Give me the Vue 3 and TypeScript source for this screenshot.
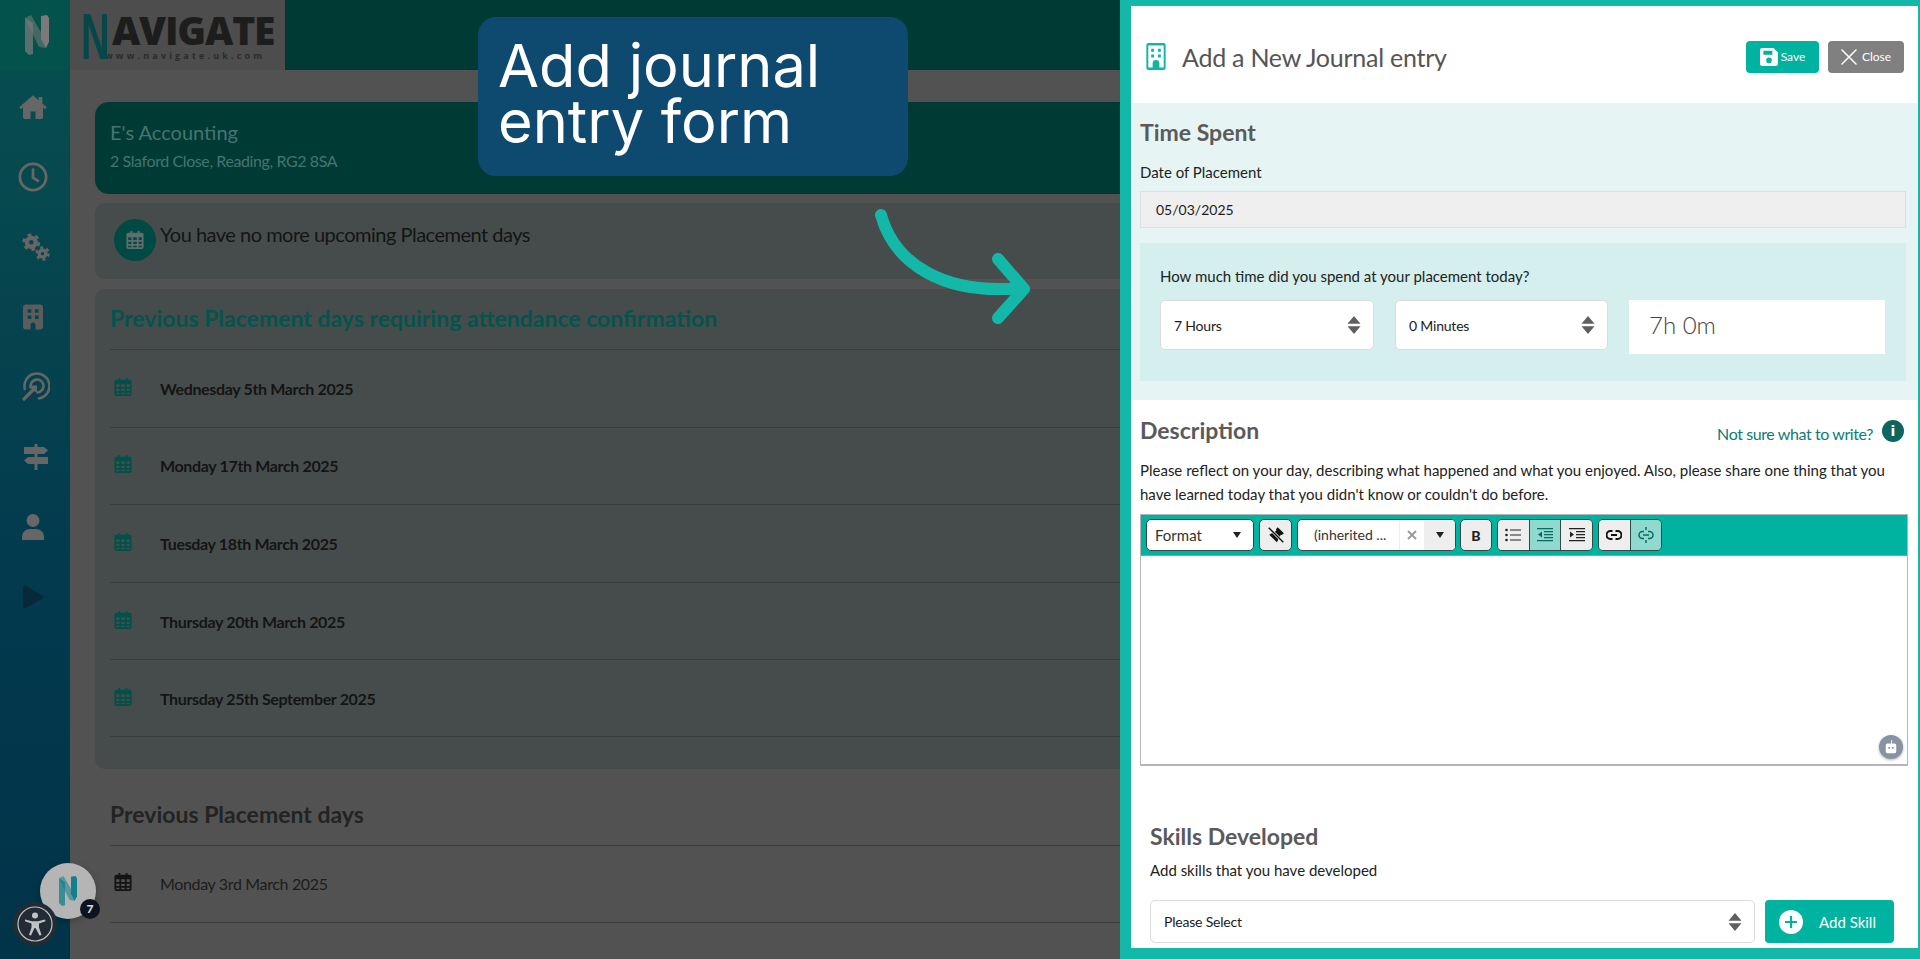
<script setup lang="ts">
const pending: string[] = [
  'Wednesday 5th March 2025',
  'Monday 17th March 2025',
  'Tuesday 18th March 2025',
  'Thursday 20th March 2025',
  'Thursday 25th September 2025',
]
</script>

<template>
  <div class="page">
    <svg class="defs" width="0" height="0" aria-hidden="true">
      <symbol id="cal" viewBox="0 0 20 20">
        <path fill-rule="evenodd" d="M5 0h2v2h6V0h2v2h2.500A2 2 0 0 1 19.500 4v14a2 2 0 0 1-2 2h-15a2 2 0 0 1-2-2V4a2 2 0 0 1 2-2H5zM2.500 7v3h3.500V7zm5.500 0v3h4V7zm6 0v3h3.500V7zM2.500 12v2.500h3.500V12zm5.500 0v2.500h4V12zm6 0v2.500h3.500V12zM2.500 16.500v1.500h3.500v-1.500zm5.500 0v1.500h4v-1.500zm6 0v1.500h3.500v-1.500z" />
      </symbol>
      <symbol id="updown" viewBox="0 0 14 18">
        <path d="M7 0l6.500 7.800H.5zM.5 10.200h13L7 18z" />
      </symbol>
      <symbol id="nmark" viewBox="0 0 24 40">
        <path d="M0 3l8 5v31l-4 1-4-4z" opacity=".75" />
        <path d="M0 3l6-3 15 26v7l-7-1z" opacity=".55" />
        <path d="M16 1l6-1 2 3v24l-3 6-5-9z" />
      </symbol>
    </svg>

    <aside class="sidebar">
      <div class="side-top">
        <svg class="side-n" width="24" height="40"><use href="#nmark" /></svg>
      </div>
      <nav class="side-nav">
        <svg viewBox="0 0 24 24" width="30" height="30" fill="#666"><path d="M12 2.500 1 12.200l1.300 1.500L4 12.300V20a1.500 1.500 0 0 0 1.500 1.500H10v-6h4v6h4.500A1.500 1.500 0 0 0 20 20v-7.700l1.700 1.400 1.300-1.500-3.500-3V4h-3v2.600z" /></svg>
        <svg viewBox="0 0 24 24" width="30" height="30" fill="none" stroke="#666" stroke-width="2.200" stroke-linecap="round"><circle cx="12" cy="12" r="10.500" /><path d="M12 6v6.500l4 2.500" /></svg>
        <svg viewBox="0 0 32 32" width="32" height="32" fill="none" stroke="#666"><circle cx="11" cy="11" r="4.700" stroke-width="4.600" /><circle cx="11" cy="11" r="8" stroke-width="3" stroke-dasharray="4 4.380" /><circle cx="23" cy="23" r="3.600" stroke-width="3.600" /><circle cx="23" cy="23" r="6.400" stroke-width="2.600" stroke-dasharray="3.200 3.500" /></svg>
        <svg viewBox="0 0 20 25" width="20" height="25" fill="#5c5c5c"><path fill-rule="evenodd" d="M3 0h14a3 3 0 0 1 3 3v19a3 3 0 0 1-3 3h-4.500v-4.500a2.500 2.500 0 0 0-5 0V25H3a3 3 0 0 1-3-3V3a3 3 0 0 1 3-3zm1.700 4.700v3.600h3.600V4.700zm7.300 0v3.600h3.600V4.700zM4.700 11v3.600h3.600V11zm7.300 0v3.600h3.600V11z" /></svg>
        <svg viewBox="0 0 28 28" width="28" height="28" fill="none" stroke="#666" stroke-width="2.600" stroke-linecap="round"><path d="M2.800 16A12.500 12.500 0 1 1 17 25.400" /><path d="M8.700 14.500A6.500 6.500 0 1 1 15.500 19.500" /><path d="M2 26l10-10" stroke-width="3.200" /><path d="M15 12.500V20l-3-2-2-2-2.500-3.500z" fill="#666" stroke="none" /></svg>
        <svg viewBox="0 0 26 26" width="26" height="26" fill="#666"><path d="M11.500 0h3v26h-3z" /><path d="M1 3h20l4 3.500-4 3.500H1zM5 13h20v7H5l-4-3.500z" /></svg>
        <svg viewBox="0 0 22 26" width="22" height="26" fill="#666"><circle cx="11" cy="6.500" r="6.500" /><path d="M0 26v-3c0-5 4-8 8-8h6c4 0 8 3 8 8v3z" /></svg>
        <svg class="play" viewBox="0 0 22 24" width="22" height="24" fill="#07293a"><path d="M1 2.500C1 1 2.500.300 3.700 1l17 9.500c1.300.7 1.300 2.300 0 3l-17 9.500C2.500 23.700 1 23 1 21.500z" /></svg>
      </nav>
    </aside>

    <main class="main">
      <header class="topbar">
        <div class="logo">
          <div class="logo-word"><span class="logo-n">N</span><span>AVIGATE</span></div>
          <div class="logo-url">www.navigate.uk.com</div>
        </div>
      </header>

      <section class="content">
        <div class="place-card">
          <div class="place-name">E's Accounting</div>
          <div class="place-addr">2 Slaford Close, Reading, RG2 8SA</div>
        </div>

        <div class="notice">
          <span class="notice-icon"><svg width="18" height="20" fill="#5f6e6c"><use href="#cal" /></svg></span>
          <span class="notice-text">You have no more upcoming Placement days</span>
        </div>

        <div class="pending">
          <h2 class="pending-title">Previous Placement days requiring attendance confirmation</h2>
          <div v-for="day in pending" :key="day" class="day-row strong">
            <svg width="18" height="20" fill="#00514a"><use href="#cal" /></svg>
            <span>{{ day }}</span>
          </div>
        </div>

        <h2 class="prev-title">Previous Placement days</h2>
        <div class="day-row plain">
          <svg width="18" height="20" fill="#141414"><use href="#cal" /></svg>
          <span>Monday 3rd March 2025</span>
        </div>
      </section>
    </main>

    <button class="float-n" type="button">
      <svg width="24" height="30" viewBox="0 0 24 40" fill="#11808a"><use href="#nmark" /></svg>
      <span class="float-badge">7</span>
    </button>
    <button class="a11y" type="button" aria-label="Accessibility">
      <svg viewBox="0 0 36 36" width="36" height="36" fill="#bfc3c6"><circle cx="18" cy="18" r="17" fill="none" stroke="#bfc3c6" stroke-width="1.200" /><circle cx="18" cy="9.500" r="3" /><path d="M8 13.500l7 1.800h6l7-1.800.5 1.700-6.500 2.300v4l2.500 7.500-2 .6L18.500 22h-1l-3.500 7.600-2-.6 2.500-7.500v-4L8 15.200z" /></svg>
    </button>

    <div class="callout">Add journal<br />entry form</div>

    <svg class="arrow" width="170" height="130" viewBox="870 200 170 130" fill="none" stroke="#14b8a8" stroke-width="12" stroke-linecap="round" stroke-linejoin="round">
      <path d="M881 215C895 265 945 295 1020 288" />
      <path d="M998 259 1024 289 998 318" />
    </svg>

    <aside class="panel">
      <div class="panel-head">
        <svg viewBox="0 0 20 28" width="20" height="27" fill="#12b5a6"><path fill-rule="evenodd" d="M2 0h16a2 2 0 0 1 2 2v24a2 2 0 0 1-2 2H2a2 2 0 0 1-2-2V2a2 2 0 0 1 2-2zm0 2.500V25.500h4.500V21a3.500 3.500 0 0 1 7 0v4.500H18V2.500zM5 6h3v3H5zm7 0h3v3h-3zM5 12h3v3H5zm7 0h3v3h-3z" /></svg>
        <h1 class="panel-title">Add a New Journal entry</h1>
        <button class="btn-save" type="button">
          <svg viewBox="0 0 16 16" width="18" height="18" fill="#fff"><path fill-rule="evenodd" d="M2 0h10l4 4v10a2 2 0 0 1-2 2H2a2 2 0 0 1-2-2V2a2 2 0 0 1 2-2zm1 2.500V6h8V2.500zM8 8.500a2.500 2.500 0 1 0 0 5 2.500 2.500 0 0 0 0-5z" /></svg>
          Save
        </button>
        <button class="btn-close" type="button">
          <svg viewBox="0 0 16 16" width="16" height="16" fill="none" stroke="#fff" stroke-width="1.500" stroke-linecap="round"><path d="M1 1l14 14M15 1 1 15" /></svg>
          Close
        </button>
      </div>

      <section class="time">
        <h2 class="h">Time Spent</h2>
        <label class="date-label">Date of Placement</label>
        <div class="date-input">05/03/2025</div>
        <div class="time-box">
          <p class="time-q">How much time did you spend at your placement today?</p>
          <div class="time-row">
            <div class="sel sel-h">7 Hours<svg width="14" height="18" fill="#5f5f5f"><use href="#updown" /></svg></div>
            <div class="sel sel-m">0 Minutes<svg width="14" height="18" fill="#5f5f5f"><use href="#updown" /></svg></div>
            <div class="total">7h 0m</div>
          </div>
        </div>
      </section>

      <section class="desc">
        <div class="desc-head">
          <h2 class="h">Description</h2>
          <a class="hint">Not sure what to write?</a>
          <span class="info">i</span>
        </div>
        <p class="desc-text">Please reflect on your day, describing what happened and what you enjoyed. Also, please share one thing that you have learned today that you didn't know or couldn't do before.</p>
        <div class="editor">
          <div class="toolbar">
            <div class="tb-format">Format<span class="caret"></span></div>
            <button class="tb-btn one" type="button" aria-label="Clear format">
              <svg viewBox="0 0 16 16" width="18" height="18"><path fill="#111" d="M9.500 1l5.500 5.500-1.800 1.600-1-.3-3.400 6.700L2 7.700l6.300-3.500-.3-1.300z" /><path d="M1.500 1.500l13 13" stroke="#eee" stroke-width="2.600" /><path d="M1.500 1.500l13 13" stroke="#111" stroke-width="1.200" /></svg>
            </button>
            <div class="tb-font">
              <span class="font-val">(inherited ...</span>
              <span class="font-x">
                <svg viewBox="0 0 10 10" width="10" height="10" stroke="#999" stroke-width="1.800"><path d="M1 1l8 8M9 1 1 9" /></svg>
              </span>
              <span class="font-c"><span class="caret"></span></span>
            </div>
            <button class="tb-btn one bold" type="button">B</button>
            <div class="tb-group three">
              <button class="tb-btn" type="button" aria-label="List">
                <svg viewBox="0 0 16 14" width="16" height="14" fill="#222"><circle cx="1.500" cy="2" r="1.300" /><circle cx="1.500" cy="7" r="1.300" /><circle cx="1.500" cy="12" r="1.300" /><path d="M5 1.400h11v1.200H5zM5 6.400h11v1.200H5zM5 11.400h11v1.200H5z" /></svg>
              </button>
              <button class="tb-btn on" type="button" aria-label="Outdent">
                <svg viewBox="0 0 16 14" width="16" height="14" fill="#0b6a62"><path d="M0 0h16v1.300H0zM7 3h9v1.300H7zM7 6h9v1.300H7zM7 9h9v1.300H7zM0 12h16v1.300H0zM5 3.500v6l-4-3z" /></svg>
              </button>
              <button class="tb-btn" type="button" aria-label="Indent">
                <svg viewBox="0 0 16 14" width="16" height="14" fill="#222"><path d="M0 0h16v1.300H0zM7 3h9v1.300H7zM7 6h9v1.300H7zM7 9h9v1.300H7zM0 12h16v1.300H0zM1 3.500v6l4-3z" /></svg>
              </button>
            </div>
            <div class="tb-group two">
              <button class="tb-btn" type="button" aria-label="Link">
                <svg viewBox="0 0 16 10" width="16" height="10" fill="none" stroke="#111" stroke-width="2"><path d="M6.500 1H4.500a4 4 0 0 0 0 8h2M9.500 1h2a4 4 0 0 1 0 8h-2M5 5h6" /></svg>
              </button>
              <button class="tb-btn on" type="button" aria-label="Unlink">
                <svg viewBox="0 0 16 16" width="16" height="16" fill="none" stroke="#0b6a62" stroke-width="1.500"><path d="M6 4.500H4.500a3.500 3.500 0 0 0 0 7H6M10 4.500h1.500a3.500 3.500 0 0 1 0 7H10M5 8h6M8 0v3M8 13v3" /></svg>
              </button>
            </div>
          </div>
          <div class="editor-body">
            <span class="robot">
              <svg viewBox="0 0 16 16" width="14" height="14" fill="#fff"><path fill-rule="evenodd" d="M8.500 0h1L9 4h3a2 2 0 0 1 2 2v7a2 2 0 0 1-2 2H4a2 2 0 0 1-2-2V6a2 2 0 0 1 2-2h4zM5 8v2h2V8zm4 0v2h2V8z" /></svg>
            </span>
          </div>
        </div>
      </section>

      <section class="skills">
        <h2 class="h">Skills Developed</h2>
        <p class="skills-sub">Add skills that you have developed</p>
        <div class="skills-row">
          <div class="sel sel-skill">Please Select<svg width="14" height="18" fill="#5f5f5f"><use href="#updown" /></svg></div>
          <button class="btn-add" type="button">
            <span class="plus">
              <svg viewBox="0 0 12 12" width="12" height="12" stroke="#00b3a1" stroke-width="2.200"><path d="M6 0v12M0 6h12" /></svg>
            </span>
            Add Skill
          </button>
        </div>
      </section>
    </aside>
  </div>
</template>

<style>
html, body { margin: 0; overflow: hidden; }
</style>

<style scoped>
.page {
  position: relative;
  display: flex;
  width: 100%;
  height: 100vh;
  overflow: hidden;
  background: #525252;
  font-family: Lato, "Open Sans", sans-serif;
  color: #1b1b1b;
}
.defs { position: absolute; }
button { font-family: inherit; padding: 0; border: 0; }
h1, h2, p { margin: 0; }

.sidebar {
  flex: 0 0 70px;
  display: flex;
  flex-direction: column;
  background: linear-gradient(180deg, #07504f 0%, #033a4e 60%, #013349 100%);
}
.side-top {
  height: 70px;
  flex: none;
  display: flex;
  align-items: center;
  justify-content: center;
  background: #03524c;
}
.side-n { fill: #7a7a7a; margin-top: -1px; margin-left: 4px; }
.side-nav {
  display: flex;
  flex-direction: column;
  align-items: center;
  padding: 22px 4px 0 0;
}
.side-nav svg { height: 30px; margin-bottom: 40px; }
.side-nav svg:nth-child(3) { margin-left: 6px; }
.side-nav svg:nth-child(5) { margin-left: 6px; }
.side-nav svg:nth-child(6) { margin-left: 6px; }

.main { flex: 1; min-width: 0; display: flex; flex-direction: column; }
.topbar { height: 70px; flex: none; background: #003a35; }
.logo {
  width: 215px;
  height: 70px;
  background: #4d4d4d;
  box-sizing: border-box;
  padding: 10px 0 0 11px;
}
.logo-word {
  display: flex;
  height: 40px;
  font-family: "Open Sans", sans-serif;
  font-weight: 800;
  font-size: 39px;
  line-height: 40px;
  letter-spacing: -1.200px;
  color: #1d1d1d;
  white-space: nowrap;
}
.logo-n {
  flex: 0 0 31px;
  width: 31px;
  min-width: 0;
  font-family: "Liberation Sans", sans-serif;
  font-weight: 700;
  font-size: 64px;
  line-height: 40px;
  letter-spacing: 0;
  color: #07474a;
  transform-origin: left bottom;
  transform: translateY(7px) scaleX(.62);
}
.logo-url {
  font-family: "Open Sans", sans-serif;
  font-weight: 700;
  font-size: 9px;
  line-height: 12px;
  letter-spacing: 3.150px;
  color: #2b2b2b;
  padding-left: 24px;
  white-space: nowrap;
}

.content { padding: 32px 0 0 25px; display: flex; flex-direction: column; }
.place-card {
  height: 92px;
  flex: none;
  box-sizing: border-box;
  padding: 16px 15px;
  border-radius: 14px;
  background: #003a35;
  color: #467570;
}
.place-name { font-size: 20px; line-height: 29px; }
.place-addr { font-size: 16px; line-height: 28px; letter-spacing: -.4px; }
.notice {
  height: 76px;
  flex: none;
  margin-top: 9px;
  display: flex;
  align-items: flex-start;
  padding: 16px 0 0 19px;
  box-sizing: border-box;
  background: #464c4c;
  border-radius: 10px;
}
.notice-icon {
  width: 42px;
  height: 42px;
  border-radius: 50%;
  background: #014a44;
  display: flex;
  align-items: center;
  justify-content: center;
  flex: none;
}
.notice-text { font-size: 20px; line-height: 30px; margin-left: 4px; letter-spacing: -.5px; color: #141414; }
.pending {
  margin-top: 10px;
  height: 480px;
  flex: none;
  box-sizing: border-box;
  padding: 13px 0 0 15px;
  background: #464c4c;
  border-radius: 10px;
}
.pending-title {
  font-size: 23px;
  line-height: 32px;
  font-weight: 700;
  color: #03544c;
  height: 47px;
}
.day-row {
  height: 77.600px;
  box-sizing: border-box;
  display: flex;
  align-items: center;
  border-top: 1px solid #393c3c;
  font-size: 16px;
  letter-spacing: -.35px;
  padding-left: 4px;
  margin-left: 0;
}
.day-row svg { flex: none; margin-right: 28px; margin-top: -3px; }
.day-row.strong { font-weight: 700; color: #141414; }
.day-row.strong:last-child { border-bottom: 1px solid #393c3c; }
.prev-title {
  margin: 29px 0 0 15px;
  font-size: 23px;
  line-height: 32px;
  height: 47px;
  font-weight: 700;
  color: #232323;
}
.day-row.plain {
  margin-left: 15px;
  border-bottom: 1px solid #393c3c;
  color: #1c1c1c;
}

.float-n {
  position: absolute;
  left: 40px;
  top: 863px;
  width: 56px;
  height: 56px;
  border-radius: 50%;
  background: #b5b5b5;
  display: flex;
  align-items: center;
  justify-content: center;
  box-shadow: 0 2px 6px rgba(0, 0, 0, .25);
}
.float-badge {
  position: absolute;
  right: -4px;
  bottom: 0;
  width: 20px;
  height: 20px;
  border-radius: 50%;
  background: #0c1420;
  color: #d8d8d8;
  font-size: 12px;
  font-weight: 900;
  line-height: 20px;
  text-align: center;
}
.a11y {
  position: absolute;
  left: 13px;
  top: 902px;
  width: 44px;
  height: 44px;
  border-radius: 50%;
  background: #232c35;
  display: flex;
  align-items: center;
  justify-content: center;
}

.callout {
  position: absolute;
  left: 478px;
  top: 17px;
  width: 430px;
  height: 159px;
  box-sizing: border-box;
  padding: 20px 20px 0;
  border-radius: 18px;
  background: #0e4a6f;
  color: #fff;
  font-family: Inter, "Open Sans", sans-serif;
  font-size: 59.500px;
  line-height: 56px;
}
.arrow { position: absolute; left: 870px; top: 200px; }

.panel {
  position: absolute;
  top: 0;
  right: 0;
  bottom: 0;
  width: 800px;
  box-sizing: border-box;
  border: solid #14b8a8;
  border-width: 6px 2px 11px 11px;
  padding-left: 1px;
  background: #fff;
  overflow: hidden;
  display: flex;
  flex-direction: column;
}
.panel-head {
  height: 97px;
  flex: none;
  display: flex;
  align-items: center;
  padding: 4px 14px 0 14px;
  box-sizing: border-box;
}
.panel-title {
  flex: 1;
  margin-left: 16px;
  font-size: 25px;
  font-weight: 400;
  letter-spacing: -.25px;
  color: #555;
}
.btn-save, .btn-close {
  height: 32px;
  border-radius: 4px;
  color: #fff;
  font-size: 12px;
  display: flex;
  align-items: center;
  justify-content: center;
  gap: 3px;
}
.btn-save { width: 73px; background: #00b3a1; }
.btn-close { width: 76px; margin-left: 9px; background: #808080; gap: 5px; }
.h { font-size: 23px; line-height: 28px; font-weight: 700; color: #5a5a5a; }

.time {
  height: 297px;
  flex: none;
  box-sizing: border-box;
  padding: 15px 12px 0 8px;
  background: #e6f5f4;
}
.date-label { display: block; margin-top: 14px; font-size: 15px; line-height: 24px; color: #222; }
.date-input {
  margin-top: 7px;
  height: 37px;
  box-sizing: border-box;
  padding-left: 15px;
  border: 1px solid #dfdfdf;
  background: #efefef;
  font-size: 14px;
  line-height: 35px;
  color: #1b1b1b;
}
.time-box {
  margin-top: 15px;
  height: 138px;
  box-sizing: border-box;
  padding: 21px 21px 0 20px;
  background: #d4efed;
}
.time-q { font-size: 15px; line-height: 24px; color: #222; }
.time-row { margin-top: 12px; display: flex; align-items: flex-start; gap: 21px; }
.sel {
  box-sizing: border-box;
  display: flex;
  align-items: center;
  justify-content: space-between;
  background: #fff;
  border: 1px solid #dcdcdc;
  border-radius: 5px;
  font-size: 14px;
  letter-spacing: -.2px;
  color: #1b1b1b;
  padding: 0 12px 0 13px;
}
.sel-h { width: 214px; height: 50px; }
.sel-m { width: 213px; height: 50px; }
.total {
  width: 256px;
  height: 54px;
  box-sizing: border-box;
  padding-left: 20px;
  background: #fff;
  font-size: 24px;
  font-weight: 300;
  line-height: 50px;
  color: #444;
}

.desc { flex: none; padding: 16px 10px 0 8px; }
.desc-head { display: flex; align-items: center; height: 28px; }
.desc-head .h { flex: 1; }
.hint { font-size: 16px; letter-spacing: -.4px; color: #0f7a76; margin-top: 7px; }
.info {
  width: 22px;
  height: 22px;
  margin: 2px 4px 0 9px;
  border-radius: 50%;
  background: #0c6660;
  color: #fff;
  font-family: "DejaVu Sans", sans-serif;
  font-weight: 700;
  font-size: 14px;
  line-height: 22px;
  text-align: center;
}
.desc-text { margin-top: 14px; font-size: 15px; line-height: 24px; color: #222; }
.editor {
  position: relative;
  margin-top: 8px;
  height: 252px;
  box-sizing: border-box;
  border: solid #b5b5b5;
  border-width: 1px 1px 2px 1px;
  display: flex;
  flex-direction: column;
}
.toolbar {
  height: 41px;
  flex: none;
  box-sizing: border-box;
  padding: 4px 0 0 5px;
  display: flex;
  align-items: flex-start;
  gap: 5px;
  background: #00b3a1;
  border-bottom: 1px solid #9a9a9a;
}
.tb-format, .tb-font, .tb-group, .tb-btn.one {
  height: 32px;
  box-sizing: border-box;
  border: 1px solid #2f4a46;
  border-radius: 5px;
  overflow: hidden;
}
.tb-format {
  width: 108px;
  display: flex;
  align-items: center;
  justify-content: space-between;
  padding: 0 12px 0 8px;
  background: #fff;
  font-size: 15px;
  color: #333;
}
.caret {
  display: block;
  width: 0;
  height: 0;
  border: solid transparent;
  border-width: 6px 4px 0;
  border-top-color: #222;
}
.tb-btn {
  height: 30px;
  background: #eee;
  display: flex;
  align-items: center;
  justify-content: center;
  flex: 1;
}
.tb-btn.one { flex: none; width: 33px; height: 32px; }
.tb-btn.bold { width: 32px; margin-left: -1px; }
.bold { font-size: 14px; font-weight: 900; color: #222; }
.tb-font { width: 159px; display: flex; background: #fff; font-size: 14px; color: #333; }
.font-val { width: 102px; padding-left: 16px; box-sizing: border-box; line-height: 30px; border-right: 1px solid #eee; white-space: nowrap; }
.font-x { width: 24px; display: flex; align-items: center; justify-content: center; }
.font-c { flex: 1; background: #eee; display: flex; align-items: center; justify-content: center; }
.tb-group { display: flex; flex: none; }
.tb-group.three { width: 96px; }
.tb-group.two { width: 64px; }
.tb-group .tb-btn + .tb-btn { border-left: 1px solid #2f4a46; }
.tb-btn.on { background: #8fd9ce; }
.editor-body { flex: 1; position: relative; }
.robot {
  position: absolute;
  right: 4px;
  bottom: 5px;
  width: 24px;
  height: 24px;
  border-radius: 50%;
  background: #8792a2;
  display: flex;
  align-items: center;
  justify-content: center;
  box-shadow: 0 1px 3px rgba(0, 0, 0, .3);
}

.skills { flex: none; margin-top: 56px; padding: 0 24px 0 18px; }
.skills-sub { margin-top: 8px; font-size: 15px; line-height: 24px; color: #222; }
.skills-row { margin-top: 18px; display: flex; gap: 10px; }
.sel-skill { flex: 1; height: 43px; }
.btn-add {
  width: 129px;
  height: 43px;
  border-radius: 4px;
  background: #00b3a1;
  color: #fff;
  font-size: 15px;
  display: flex;
  align-items: center;
  padding-left: 14px;
  box-sizing: border-box;
  gap: 16px;
}
.plus {
  width: 24px;
  height: 24px;
  border-radius: 50%;
  background: #fff;
  display: flex;
  align-items: center;
  justify-content: center;
}
</style>
